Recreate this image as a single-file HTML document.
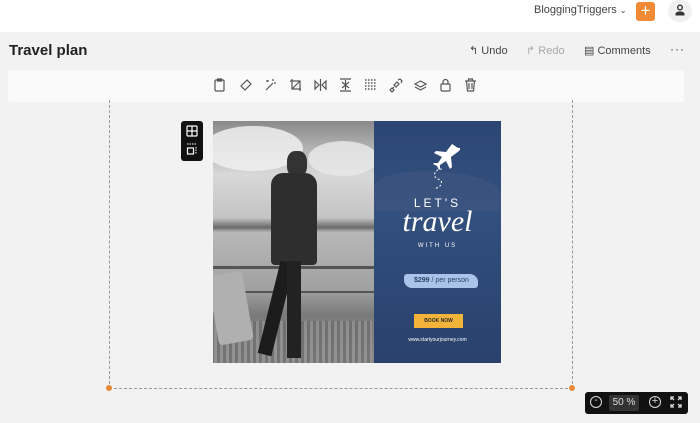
<!DOCTYPE html>
<html><head><style>
*{margin:0;padding:0;box-sizing:border-box}
body{width:700px;height:423px;overflow:hidden;background:#f2f2f2;font-family:"Liberation Sans",sans-serif;position:relative;color:#333}
.top{position:absolute;left:0;top:0;width:700px;height:32px;background:#fff}
.abs{position:absolute}
.ti{position:absolute;top:78px}
</style></head><body>
<div class="top"></div>
<div class="abs" style="left:534px;top:4px;font-size:11px;color:#444">BloggingTriggers <span style="font-size:8px">⌄</span></div>
<div class="abs" style="left:636px;top:2px;width:19px;height:19px;background:#f08a35;border-radius:3px;color:#fff;font-size:17px;line-height:18px;text-align:center">+</div>
<div class="abs" style="left:668px;top:0;width:24px;height:22px;border-radius:50%;background:#f0f0f0"></div>
<svg class="abs" style="left:673px;top:3px" width="14" height="14" viewBox="0 0 14 14"><circle cx="7" cy="4.5" r="2.3" fill="none" stroke="#333" stroke-width="1.4"/><path d="M2.5 12.5h9v-1.5c0-1.5-2-2.5-4.5-2.5s-4.5 1-4.5 2.5z" fill="#333"/></svg>
<div class="abs" style="left:9px;top:42px;font-size:15px;font-weight:bold;color:#222">Travel plan</div>
<div class="abs" style="left:469px;top:44px;font-size:11px;color:#444">↰ Undo</div>
<div class="abs" style="left:526px;top:44px;font-size:11px;color:#aaa">↱ Redo</div>
<div class="abs" style="left:584px;top:44px;font-size:11px;color:#444">▤ Comments</div>
<div class="abs" style="left:670px;top:42px;font-size:12px;color:#444;letter-spacing:1px">···</div>
<div class="abs" style="left:8px;top:70px;width:676px;height:32px;background:#fafafa;border-radius:3px"></div>
<svg class="abs" style="left:210px;top:76px" width="280" height="18" viewBox="0 0 280 18" fill="none" stroke="#555" stroke-width="1.2">
<g transform="translate(4,2)"><rect x="1" y="2" width="9" height="11" rx="1"/><path d="M3.5 1h4v2h-4z"/></g>
<g transform="translate(29,2)"><path d="M2 8l6-6 4 4-6 6z"/></g>
<g transform="translate(54,2)"><path d="M2 12l7-7M4 2v2M2 3h2M9 1v2M11 4v2"/></g>
<g transform="translate(79,2)"><path d="M3 1v10h9M1 3h10v10M3 11l8-8"/></g>
<g transform="translate(104,2)"><path d="M6.5 1v12M1 3l4 4-4 4zM12 3l-4 4 4 4z"/></g>
<g transform="translate(129,2)"><path d="M1 1h11M1 13h11M6.5 2v10M3 4l3.5 3 3.5-3M3 10l3.5-3 3.5 3"/></g>
<g transform="translate(154,2)" stroke-dasharray="1.5 1.5" stroke-width="1.6"><path d="M1 2h11M1 5h11M1 8h11M1 11h11"/></g>
<g transform="translate(179,2)"><path d="M3 11l2-2M5 7l3-3 2 2-3 3zM1 12l2-2 2 2-2 2zM9 2l2-1 2 2-1 2"/></g>
<g transform="translate(204,2)"><path d="M1 6l5.5-3 5.5 3-5.5 3zM1 9l5.5 3 5.5-3"/></g>
<g transform="translate(229,2)"><rect x="2" y="6" width="9" height="7" rx="1"/><path d="M4 6V4a2.5 2.5 0 015 0v2"/></g>
<g transform="translate(254,2)"><path d="M1 3h11M4.5 3V1h4v2M2.5 3l1 10h6l1-10M5 5v6M8 5v6"/></g>
</svg>
<div class="abs" style="left:109px;top:100px;width:464px;height:289px;border-left:1px dashed #999;border-right:1px dashed #999;border-bottom:1px dashed #999"></div>
<div class="abs" style="left:106px;top:385px;width:6px;height:6px;border-radius:50%;background:#e88a3a"></div>
<div class="abs" style="left:569px;top:385px;width:6px;height:6px;border-radius:50%;background:#e88a3a"></div>
<div class="abs" style="left:181px;top:121px;width:22px;height:40px;background:#111;border-radius:3px"></div>
<svg class="abs" style="left:186px;top:125px" width="12" height="32" viewBox="0 0 12 32"><rect x="1" y="1" width="10" height="10" rx="1" fill="none" stroke="#fff" stroke-width="1.2"/><path d="M6 1v10M1 6h10" stroke="#fff" stroke-width="1.2"/><path d="M1 19h10" stroke="#fff" stroke-dasharray="1.5 1"/><rect x="1.5" y="23" width="6" height="6" fill="none" stroke="#fff" stroke-width="1.2"/><path d="M10 22v7" stroke="#fff" stroke-dasharray="1.5 1"/></svg>
<!-- photo -->
<div class="abs" style="left:213px;top:121px;width:161px;height:242px;overflow:hidden;background:linear-gradient(#8a8a8a 0%,#d8d8d8 22%,#c4c4c4 40%,#6a6a6a 44%,#b8b8b8 46%,#a0a0a0 70%,#7a7a7a 80%,#8a8a8a 100%)">
<div class="abs" style="left:-10px;top:5px;width:100px;height:45px;border-radius:50%;background:#f0f0f0;opacity:.85"></div>
<div class="abs" style="left:95px;top:20px;width:70px;height:35px;border-radius:50%;background:#e8e8e8;opacity:.85"></div>
<div class="abs" style="left:0;top:145px;width:161px;height:3px;background:#555"></div>
<div class="abs" style="left:0;top:170px;width:161px;height:2px;background:#555"></div>
<div class="abs" style="left:-2px;top:200px;width:161px;height:42px;background:repeating-linear-gradient(90deg,#666 0 3px,#999 3px 6px);opacity:.6"></div>
<div class="abs" style="left:74px;top:30px;width:20px;height:26px;border-radius:40%;background:#333"></div>
<div class="abs" style="left:58px;top:52px;width:46px;height:92px;background:#2e2e2e;border-radius:12px 12px 4px 4px"></div>
<div class="abs" style="left:56px;top:140px;width:14px;height:95px;background:#1c1c1c;transform:rotate(14deg)"></div>
<div class="abs" style="left:74px;top:140px;width:14px;height:97px;background:#222"></div>
<div class="abs" style="left:0;top:152px;width:35px;height:70px;background:#b0b0b0;transform:rotate(-10deg);border-radius:4px"></div>
</div>
<!-- right panel -->
<div class="abs" style="left:374px;top:121px;width:127px;height:242px;background:linear-gradient(#2b4673 0%,#34507e 35%,#2e4a77 60%,#2a426c 100%)">
<div class="abs" style="left:0;top:50px;width:127px;height:40px;background:#3f5680;opacity:.6;border-radius:40% 60% 0 0"></div>
<svg class="abs" style="left:48px;top:20px" width="45" height="55" viewBox="0 0 45 55"><path d="M30 3l-6 8-10-1-2 2 8 4-4 6-4 0-1 1 4 2 2 4 1-1 0-4 6-4 4 8 2-2-1-10 8-6c2-2 1-4-1-3z" fill="#fff"/><path d="M20 28c-8 0-10 8-4 10 6 2 4 8-4 10" fill="none" stroke="#fff" stroke-dasharray="2 2"/></svg>
<div class="abs" style="left:0;top:75px;width:127px;text-align:center;color:#fff;font-size:12px;letter-spacing:3px">LET'S</div>
<div class="abs" style="left:0;top:84px;width:127px;text-align:center;color:#fff;font-size:30px;font-style:italic;font-family:'Liberation Serif',serif">travel</div>
<div class="abs" style="left:0;top:122px;width:127px;text-align:center;color:#fff;font-size:6px;letter-spacing:2px">WITH US</div>
<div class="abs" style="left:30px;top:153px;width:74px;height:14px;background:#a9c4e8;border-radius:3px 8px 3px 8px;color:#2a426c;font-size:7px;line-height:14px;padding-left:10px"><b>$299</b> / per person</div>
<div class="abs" style="left:40px;top:193px;width:49px;height:14px;background:#f4b43a;color:#2a2a2a;font-size:5px;font-weight:bold;text-align:center;line-height:14px">BOOK NOW</div>
<div class="abs" style="left:0;top:216px;width:127px;text-align:center;color:#fff;font-size:5px">www.startyourjourney.com</div>
</div>
<!-- zoom -->
<div class="abs" style="left:585px;top:392px;width:103px;height:22px;background:#111;border-radius:3px"></div>
<div class="abs" style="left:590px;top:396px;width:12px;height:12px;border:1.5px solid #ddd;border-radius:50%;color:#ddd;font-size:10px;line-height:8px;text-align:center">-</div>
<div class="abs" style="left:609px;top:395px;width:30px;height:16px;background:#333;border-radius:2px;color:#ddd;font-size:10px;line-height:16px;text-align:center">50 %</div>
<div class="abs" style="left:649px;top:396px;width:12px;height:12px;border:1.5px solid #ddd;border-radius:50%;color:#ddd;font-size:11px;line-height:9px;text-align:center">+</div>
<svg class="abs" style="left:670px;top:396px" width="12" height="12" viewBox="0 0 12 12" fill="none" stroke="#ddd" stroke-width="1.3"><path d="M1 4V1h3M8 1h3v3M11 8v3H8M4 11H1V8M1 1l3 3M11 1L8 4M11 11L8 8M1 11l3-3"/></svg>
</body></html>
